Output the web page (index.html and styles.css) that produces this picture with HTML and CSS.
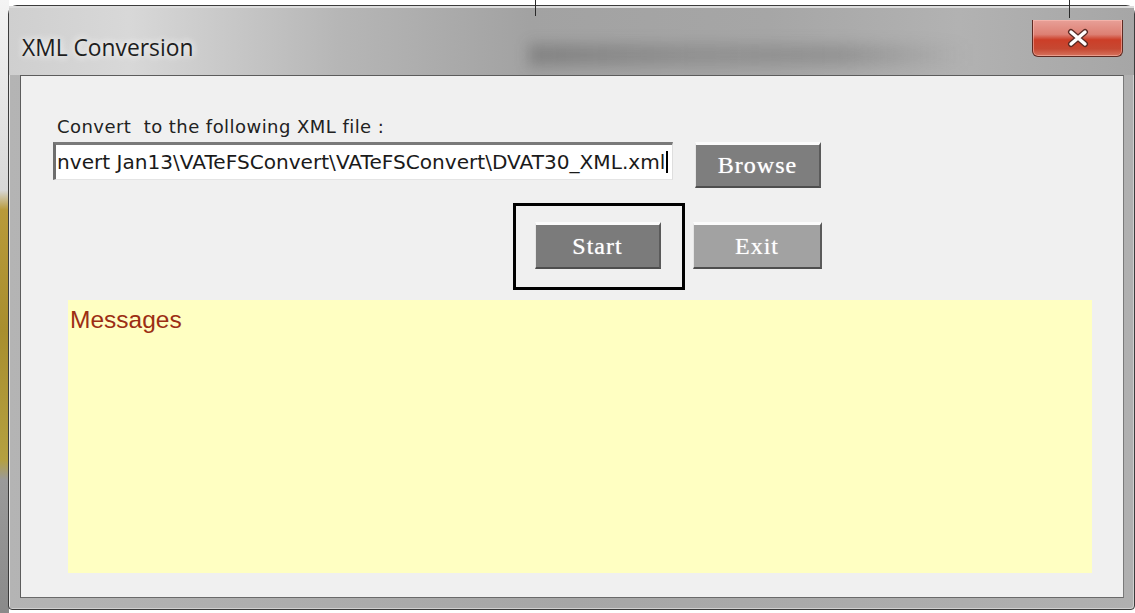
FILE: index.html
```html
<!DOCTYPE html>
<html lang="en">
<head>
<meta charset="utf-8">
<title>XML Conversion</title>
<link rel="stylesheet" href="styles.css">
</head>
<body>
<div class="desktop">
  <span class="bg-line bg-line-a"></span>
  <span class="bg-line bg-line-b"></span>
  <div class="window">
    <div class="titlebar">
      <div class="glass-blur"></div>
      <span class="title">XML Conversion</span>
      <button class="close" type="button" aria-label="Close">
        <svg width="26" height="20" viewBox="0 0 26 20" aria-hidden="true">
          <path d="M6 4 L20 16 M20 4 L6 16" stroke="#5a2a24" stroke-width="6" stroke-linecap="round"/>
          <path d="M6 4 L20 16 M20 4 L6 16" stroke="#ffffff" stroke-width="3.4" stroke-linecap="round"/>
        </svg>
      </button>
    </div>
    <div class="client">
      <label class="field-label" for="xmlfile">Convert&nbsp; to the following XML file :</label>
      <div class="file-row">
        <div class="path-box" id="xmlfile">nvert Jan13\VATeFSConvert\VATeFSConvert\DVAT30_XML.xml<span class="caret"></span></div>
        <button class="btn btn-browse" type="button">Browse</button>
      </div>
      <div class="action-row">
        <div class="focus-ring">
          <button class="btn btn-start" type="button">Start</button>
        </div>
        <button class="btn btn-exit" type="button">Exit</button>
      </div>
      <div class="messages">Messages</div>
    </div>
  </div>
</div>
</body>
</html>
```
FILE: styles.css
```css
* { box-sizing: border-box; }

html, body {
  margin: 0;
  padding: 0;
}

body {
  width: 1135px;
  height: 613px;
  overflow: hidden;
  background: #ffffff;
}

.desktop {
  position: relative;
  height: 613px;
  padding: 5px 0 0 8px;
  background:
    linear-gradient(to bottom, #f4f4f4 0, #d8d8d8 190px, #b89a3a 210px, #a88e2e 330px, #b4a040 460px, #9a9a9a 480px, #8a8a8a 613px) left top / 9px 613px no-repeat,
    #ffffff;
}

/* thin dark lines of the window underneath, showing through the glass */
.bg-line {
  position: absolute;
  top: 0;
  width: 1px;
  background: #2a2a2a;
  z-index: 2;
}
.bg-line-a { left: 535px; height: 16px; }
.bg-line-b { left: 1069px; height: 18px; }

.window {
  position: relative;
  width: 1127px;
  height: 605px;
  display: flex;
  flex-direction: column;
  padding: 0 10px 11px 11px;
  border: 1px solid #3c3c3c;
  border-radius: 9px 9px 4px 4px;
  background: linear-gradient(to right, #b4b4b4 0, #a6a6a6 50%, #b0b0b0 100%);
  box-shadow: inset 1px 1px 0 #e6e6e6, inset -1px -1px 0 #d0d0d0;
}

.titlebar {
  position: relative;
  height: 69px;
  display: flex;
  justify-content: space-between;
  align-items: flex-start;
  margin: 0 -10px 0 -11px;
  padding: 12px 11px 0 13px;
  border-top: 2px solid #dcdcdc;
  background: linear-gradient(to right, #cfcfcf 0, #d8d8d8 120px, #b6b6b6 330px, #a2a2a2 520px, #a6a6a6 760px, #b2b2b2 950px, #a6a6a6 100%);
  overflow: hidden;
}

.glass-blur {
  position: absolute;
  left: 520px;
  top: 36px;
  width: 440px;
  height: 22px;
  background: linear-gradient(to right, rgba(60,60,60,0.3), rgba(70,70,70,0.2) 40%, rgba(80,80,80,0.25) 70%, rgba(90,90,90,0));
  filter: blur(7px);
}

.title {
  position: relative;
  margin-top: 14px;
  font-family: "Open Sans", "Noto Sans", sans-serif;
  font-size: 22.8px;
  line-height: 28px;
  color: #1e1e1e;
  text-shadow: 0 0 10px #ffffff, 0 0 6px #f0f0f0;
}

.close {
  position: relative;
  width: 91px;
  height: 37px;
  padding: 0;
  margin: 0;
  display: flex;
  align-items: center;
  justify-content: center;
  border: 1px solid #5e2a22;
  border-top: 0;
  border-radius: 0 0 6px 6px;
  background: linear-gradient(to bottom, #e8a098 0, #dd8074 40%, #cc3e28 55%, #c64832 80%, #d6735e 100%);
  box-shadow: inset 0 0 0 1px rgba(255,200,190,0.5);
}

.client {
  flex: 1;
  display: flex;
  flex-direction: column;
  align-items: flex-start;
  padding-top: 40px;
  background: #f0f0f0;
  border: 1px solid #5c5c5c;
  border-right-color: #7a7a7a;
  border-bottom-color: #6a6a6a;
}

.field-label {
  margin-left: 36px;
  font-family: "DejaVu Sans", Verdana, sans-serif;
  font-size: 18px;
  letter-spacing: 0.45px;
  line-height: 22px;
  color: #222222;
}

.file-row {
  display: flex;
  align-items: flex-start;
  margin-top: 4px;
  margin-left: 32px;
}

.path-box {
  width: 620px;
  height: 38px;
  padding: 0 0 0 1px;
  display: flex;
  align-items: center;
  white-space: nowrap;
  overflow: hidden;
  background: #ffffff;
  border-top: 3px solid #7a7a7a;
  border-left: 3px solid #6e6e6e;
  border-right: 1px solid #dedede;
  border-bottom: 1px solid #e4e4e4;
  font-family: "DejaVu Sans", Verdana, sans-serif;
  font-size: 20.1px;
  color: #1a1a1a;
}

.caret {
  display: inline-block;
  flex: none;
  width: 2px;
  height: 22px;
  margin-left: 1px;
  background: #000000;
}

.btn {
  padding: 0;
  margin: 0;
  font-family: "Liberation Serif", "Times New Roman", serif;
  font-size: 24px;
  letter-spacing: 1px;
  color: #ffffff;
  text-shadow: 0 0 1px #dddddd;
  border-style: solid;
  border-width: 3px 2px 2px 1px;
  border-color: #fbfbfb #5a5a5a #4e4e4e #e4e4e4;
}

.btn-browse {
  width: 126px;
  height: 46px;
  margin-left: 22px;
  background: #7e7e7e;
}

.action-row {
  display: flex;
  align-items: flex-start;
  margin-top: 15px;
  margin-left: 492px;
}

.focus-ring {
  width: 172px;
  height: 87px;
  padding: 16px 0 0 19px;
  border: 3px solid #000000;
}

.btn-start {
  width: 126px;
  height: 47px;
  background: #7b7b7b;
}

.btn-exit {
  width: 129px;
  height: 47px;
  margin-top: 19px;
  margin-left: 8px;
  background: #a2a2a2;
}

.messages {
  width: 1024px;
  height: 273px;
  margin-top: 10px;
  margin-left: 47px;
  padding: 6px 0 0 2px;
  background: #ffffc2;
  font-family: "Liberation Sans", Arial, sans-serif;
  font-size: 24.5px;
  line-height: 28px;
  color: #9c2e14;
}
```
